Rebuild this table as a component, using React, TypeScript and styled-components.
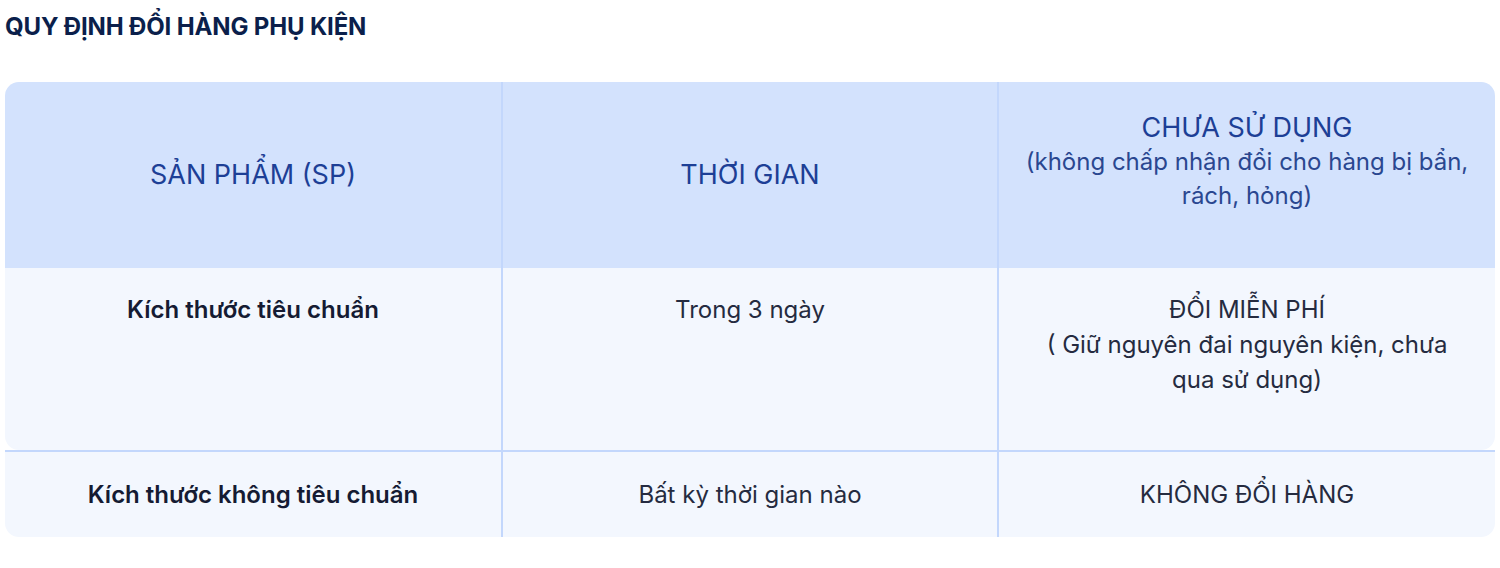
import styled, { createGlobalStyle } from "styled-components";

const GlobalStyle = createGlobalStyle`
  body {
    margin: 0;
    background: #ffffff;
    font-family: Inter, "Noto Sans", sans-serif;
  }
`;

const Page = styled.div`
  padding: 13px 5px 0 5px;
`;

const Title = styled.h2`
  margin: 0 0 41px 0;
  font-size: 24px;
  line-height: 28px;
  font-weight: 700;
  color: #0b1f4b;
  letter-spacing: -0.15px;
`;

const Table = styled.div`
  display: flex;
  flex-direction: column;
  width: 1490px;
`;

const Row = styled.div<{ $head?: boolean; $top?: boolean; $bottom?: boolean; $line?: boolean }>`
  display: grid;
  grid-template-columns: 496px 496px 498px;
  background: ${(p) => (p.$head ? "#d3e2fd" : "#f3f7fe")};
  border-radius: ${(p) => (p.$top ? "14px 14px 0 0" : p.$bottom ? "0 0 14px 14px" : "0")};
  border-top: ${(p) => (p.$line ? "2px solid #c3d7fc" : "none")};
  overflow: hidden;
`;

const Cell = styled.div<{ $h: number; $align?: "top" | "middle"; $first?: boolean }>`
  height: ${(p) => p.$h}px;
  box-sizing: border-box;
  display: flex;
  flex-direction: column;
  align-items: center;
  justify-content: ${(p) => (p.$align === "top" ? "flex-start" : "center")};
  padding: ${(p) => (p.$align === "top" ? "24px 20px 0" : "0 20px")};
  border-left: ${(p) => (p.$first ? "none" : "2px solid #c3d7fc")};
  text-align: center;
`;

const HeadMain = styled.div`
  font-size: 27px;
  line-height: 34px;
  color: #1d3f96;
`;

const HeadSub = styled.div`
  font-size: 24px;
  line-height: 34px;
  margin-bottom: 27px;
  color: #2a4790;
`;

const BodyText = styled.div<{ $bold?: boolean }>`
  font-size: 24px;
  line-height: 35px;
  font-weight: ${(p) => (p.$bold ? 600 : 400)};
  color: ${(p) => (p.$bold ? "#151b33" : "#252b40")};
`;

export default function App() {
  return (
    <Page>
      <GlobalStyle />
      <Title>QUY ĐỊNH ĐỔI HÀNG PHỤ KIỆN</Title>
      <Table>
        <Row $head $top>
          <Cell $h={186} $first>
            <HeadMain>SẢN PHẨM (SP)</HeadMain>
          </Cell>
          <Cell $h={186}>
            <HeadMain>THỜI GIAN</HeadMain>
          </Cell>
          <Cell $h={186}>
            <HeadMain>CHƯA SỬ DỤNG</HeadMain>
            <HeadSub>
              (không chấp nhận đổi cho hàng bị bẩn,
              <br />
              rách, hỏng)
            </HeadSub>
          </Cell>
        </Row>
        <Row $bottom>
          <Cell $h={182} $align="top" $first>
            <BodyText $bold>Kích thước tiêu chuẩn</BodyText>
          </Cell>
          <Cell $h={182} $align="top">
            <BodyText>Trong 3 ngày</BodyText>
          </Cell>
          <Cell $h={182} $align="top">
            <BodyText>
              ĐỔI MIỄN PHÍ
              <br />( Giữ nguyên đai nguyên kiện, chưa
              <br />
              qua sử dụng)
            </BodyText>
          </Cell>
        </Row>
        <Row $bottom $line>
          <Cell $h={85} $first>
            <BodyText $bold>Kích thước không tiêu chuẩn</BodyText>
          </Cell>
          <Cell $h={85}>
            <BodyText>Bất kỳ thời gian nào</BodyText>
          </Cell>
          <Cell $h={85}>
            <BodyText>KHÔNG ĐỔI HÀNG</BodyText>
          </Cell>
        </Row>
      </Table>
    </Page>
  );
}
